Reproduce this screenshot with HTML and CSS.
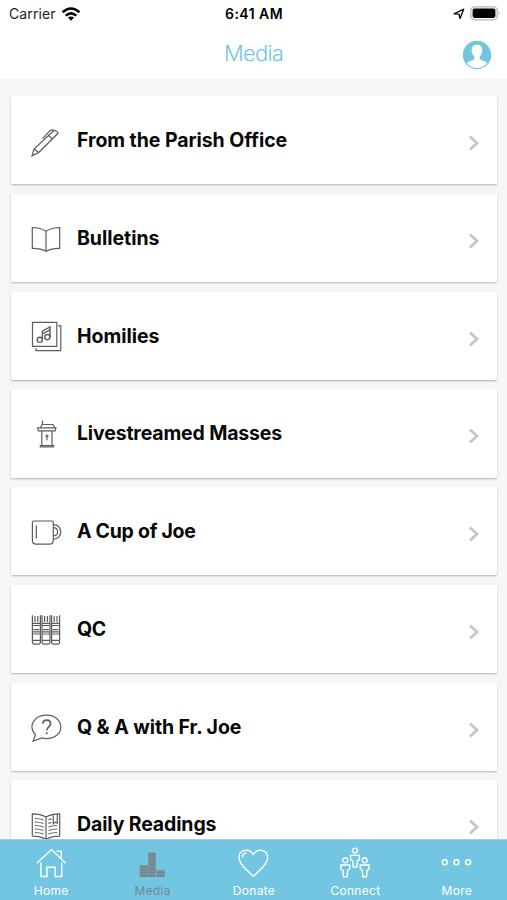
FILE: index.html
```html
<!DOCTYPE html>
<html lang="en">
<head>
<meta charset="utf-8">
<title>Media</title>
<link rel="stylesheet" href="styles.css">
</head>
<body>
<div class="app">
  <header class="header">
    <div class="status">
      <div class="status-left"><span class="carrier">Carrier</span>
        <svg class="wifi" viewBox="0 0 20 14"><g fill="none" stroke="#000" stroke-width="2.5"><path d="M1.6 5.2Q10-2.3 18.4 5.2"/><path d="M4.7 8.6Q10 4.1 15.3 8.6"/></g><path d="M6.9 10.6Q10 8.2 13.1 10.6L10 13.8Z"/></svg>
      </div>
      <span class="time">6:41 AM</span>
      <div class="status-right">
        <svg class="location" viewBox="0 0 12 12"><path d="M1 5.8 10.7 1.2 7 10.6 6.1 6.1Z" fill="none" stroke="#111" stroke-width="1.4" stroke-linejoin="round"/></svg>
        <svg class="battery" viewBox="0 0 31 15"><rect x=".8" y=".8" width="26.4" height="13" rx="3.6" fill="#fff" stroke="#b5b5b5" stroke-width="1.3"/><rect x="2.6" y="2.6" width="22.8" height="9.4" rx="2"/><path d="M28.6 5Q30.8 7.3 28.6 9.6Z" fill="#b5b5b5"/></svg>
      </div>
    </div>
    <div class="titlebar">
      <h1 class="title">Media</h1>
      <svg class="avatar" viewBox="0 0 30 30"><circle cx="15" cy="15" r="14.2" fill="#72c5e0"/><path d="M15 4.800c-3.600 0-5.600 2.500-5.300 6.200.2 2.500 1 4.200 2.700 5.700.2 2-.3 3-2.400 3.700-2.500.8-4.300 1.600-5.300 2.600A12.900 12.900 0 0 0 25.300 23c-1-1-2.800-1.800-5.300-2.600-2.100-.7-2.600-1.700-2.400-3.700 1.700-1.500 2.500-3.200 2.700-5.700.3-3.700-1.700-6.200-5.300-6.200Z" fill="#fff"/></svg>
    </div>
  </header>

  <main class="list">
    <a class="card">
      <svg class="icon" viewBox="0 0 36 36"><path d="m4 31.800 2-6.800L25 7.300q2.800-2 5 2L10.800 28.400ZM6 25l4.800 3.400M20.500 11.600l4.300 3.300M14.500 14.600l7.300-7.700q1.800-1.700 4.300-.6"/></svg>
      <span class="label l1">From the Parish Office</span>
      <svg class="chevron" viewBox="0 0 12 18"><path d="m2 2.500 7 6.500-7 6.500"/></svg>
    </a>
    <a class="card">
      <svg class="icon" viewBox="0 0 36 36"><path d="M18 9.300Q12.500 5.500 4.300 5.500v20.800q8.200-.2 13.700 3 5.500-3.200 13.700-3V5.500Q23.500 5.500 18 9.300v20"/></svg>
      <span class="label l2">Bulletins</span>
      <svg class="chevron" viewBox="0 0 12 18"><path d="m2 2.500 7 6.500-7 6.500"/></svg>
    </a>
    <a class="card">
      <svg class="icon" viewBox="0 0 36 36"><path d="M4.500 2.300h24.300v24H4.500ZM30 5.800h2.800v24.900H8v-2.700"/><g stroke-width="1.400"><circle cx="11.800" cy="19.800" r="2.600"/><circle cx="19.400" cy="17.100" r="2.600"/><path d="M14.400 19.800v-8.600L22 7v10.100M14.400 14 22 9.800"/></g></svg>
      <span class="label l3">Homilies</span>
      <svg class="chevron" viewBox="0 0 12 18"><path d="m2 2.500 7 6.500-7 6.500"/></svg>
    </a>
    <a class="card">
      <svg class="icon" viewBox="0 0 36 36"><path d="M12.500 10.500 14 7.500h11l1.700 3M9.600 10.800h18.300l-.8 3H10.400ZM13.800 14v14.500M24 14v14.500M12.300 28.500h13.300v1.400H12.300ZM14.500 7V3.600M18.900 17.200v6M17.300 19.100h3.200"/></svg>
      <span class="label l4">Livestreamed Masses</span>
      <svg class="chevron" viewBox="0 0 12 18"><path d="m2 2.500 7 6.500-7 6.500"/></svg>
    </a>
    <a class="card">
      <svg class="icon" viewBox="0 0 36 36"><path d="M5.700 6h18q1.600 0 1.600 1.600v18q0 3.600-3.600 3.600H8q-3.600 0-3.600-3.600v-18Q4.400 6 5.700 6ZM8.300 10.500v13M25.300 9.700c10-.5 10 14.800 0 14.300M25.300 12.700c5.800 0 5.800 8.200 0 8.200"/></svg>
      <span class="label l5">A Cup of Joe</span>
      <svg class="chevron" viewBox="0 0 12 18"><path d="m2 2.500 7 6.500-7 6.500"/></svg>
    </a>
    <a class="card">
      <svg class="icon" viewBox="0 0 36 36"><defs><path id="marker" d="M4.400 2.300v27q0 1.800 2 1.800h4q2 0 2-1.800v-27M7 3v6M9.800 3v6M4.400 10.300h8M4.400 12.500h8M4.400 18.800h8M4.400 21h8M4.400 27.300h8M5.500 16.700h5.800"/></defs><use href="#marker"/><use href="#marker" x="9.600"/><use href="#marker" x="19.200"/></svg>
      <span class="label l6">QC</span>
      <svg class="chevron" viewBox="0 0 12 18"><path d="m2 2.500 7 6.500-7 6.500"/></svg>
    </a>
    <a class="card">
      <svg class="icon" viewBox="0 0 36 36"><path d="M7.500 23.700C-.5 15.500 6 4.100 18.500 4.100c8 0 14.300 5 14.300 11.800 0 8.300-9.300 13.600-19.100 11L5 30.300Z"/><path class="bold" d="M14.800 12.800c0-5 7.800-4.800 7.800-.2 0 3.300-3.900 3.200-3.900 7M18.700 21.200v2"/></svg>
      <span class="label l7">Q &amp; A with Fr. Joe</span>
      <svg class="chevron" viewBox="0 0 12 18"><path d="m2 2.500 7 6.500-7 6.500"/></svg>
    </a>
    <a class="card">
      <svg class="icon" viewBox="0 0 36 36"><path d="M18 9Q12 5.700 4.300 5.800v22.400q7.700 0 13.700 3 6-3 13.700-3V5.800Q24 5.700 18 9v22M7 10.500q4.500 0 8.500 1.500M7 14q4.500 0 8.500 1.500M7 17.500q4.500 0 8.500 1.500M7 21q4.500 0 8.500 1.500M7 24.500q4.500 0 8.500 1.500M20.500 19q4-1.500 8.500-1.500M20.500 22.500q4-1.500 8.500-1.500M20.500 26q4-1.500 8.500-1.500M20.500 11.700l3-.8M20.500 15.300l3-.8M25.300 6.500v9.200l2-1.600 2 1V6"/></svg>
      <span class="label l8">Daily Readings</span>
      <svg class="chevron" viewBox="0 0 12 18"><path d="m2 2.500 7 6.500-7 6.500"/></svg>
    </a>
  </main>

  <nav class="tabs">
    <a class="tab"><svg class="tab-icon" viewBox="0 0 36 36"><path d="M3.800 18.300 18.500 4.600l14.200 13.700M23.500 6.200h4.800v7M7.900 17.500v14h6V22.300h8.300v9.200h6.500v-14"/></svg><span class="tab-label">Home</span></a>
    <a class="tab active"><svg class="tab-icon" viewBox="0 0 36 36"><path d="M5.700 20.300H14v11.800H5.700ZM14.300 7.500h7.500v24.600h-7.500ZM22.500 25.200h8.200v6.900h-8.200Z" fill="#748891" stroke="none"/><path d="M5.700 23.300H14M5.700 26.300h25M5.700 29.300h25M14.300 11h7.500M14.300 14.500h7.500M14.300 18h7.500M14.300 22h7.500" stroke="#7da9b9" stroke-width=".5"/></svg><span class="tab-label">Media</span></a>
    <a class="tab"><svg class="tab-icon" viewBox="0 0 36 36"><path d="M18.300 31.300C10.300 24 4 18.500 4 12.300c0-7.800 10.100-9.500 14.300-2.800 4.200-6.700 14.300-5 14.300 2.800 0 6.200-6.300 11.700-14.300 19ZM7.400 12.500c0-2.700 1.700-4.300 4.100-4.500"/></svg><span class="tab-label">Donate</span></a>
    <a class="tab"><svg class="tab-icon" viewBox="0 0 36 36"><defs><path id="person" d="M15.500 5.600a2.500 2.500 0 1 0 5 0a2.500 2.500 0 1 0-5 0M13.600 10.400h8.800v3.500q0 1.400-2 1.800l-.6 6.400h-3.600l-.6-6.400q-2-.4-2-1.800Z"/></defs><use href="#person"/><use href="#person" x="-9.700" y="9.600"/><use href="#person" x="9.700" y="9.600"/></svg><span class="tab-label">Connect</span></a>
    <a class="tab"><svg class="tab-icon" viewBox="0 0 36 36"><circle cx="6.800" cy="17.200" r="2.500"/><circle cx="18.500" cy="17.200" r="2.500"/><circle cx="30.200" cy="17.200" r="2.500"/></svg><span class="tab-label">More</span></a>
  </nav>
</div>
</body>
</html>
```
FILE: styles.css
```css
* { box-sizing: border-box; }
body { margin: 0; background: #f6f6f6; font-family: Inter, "Liberation Sans", sans-serif; }
.app { height: 900px; display: flex; flex-direction: column; overflow: hidden; }
.header { height: 79px; flex: none; background: #fff; }
.status { height: 27px; display: grid; grid-template-columns: 1fr auto 1fr; align-items: center; padding: 0 6px 0 9px; }
.status-left, .status-right { display: flex; align-items: center; }
.status-right { justify-content: flex-end; gap: 5px; }
.carrier { font-size: 14px; color: #222; letter-spacing: .12px; }
.wifi { width: 20px; height: 14px; margin-left: 5px; }
.time { font-size: 14px; font-weight: 600; letter-spacing: .45px; margin-right: 2px; }
.location { width: 12px; height: 12px; }
.battery { width: 31px; height: 15px; }
.titlebar { height: 52px; display: grid; grid-template-columns: 1fr auto 1fr; align-items: center; padding: 0 15px 0 14px; }
.title { grid-column: 2; margin: 0; font-size: 22px; line-height: 50px; letter-spacing: -.8px; font-weight: 300; color: #72c5e0; padding-left: 1px; }
.avatar { width: 30px; height: 30px; justify-self: end; margin-top: 3px; }
.list { flex: 1; min-height: 0; overflow: hidden; display: flex; flex-direction: column; gap: 9.500px; padding: 17px 10px 0 11px; }
.card { flex: none; height: 88.250px; display: flex; align-items: center; background: #fff; padding: 0 17px; box-shadow: 0 1px 2px rgba(0,0,0,.27); border-radius: 1px; }
.icon { width: 36px; height: 36px; margin-top: 4px; fill: none; stroke: #5c5c5c; stroke-width: 1.200; }
.bold { stroke-width: 1.600; }
.label { flex: 1; margin-left: 13px; font-size: 19.500px; line-height: 24px; font-weight: 650; color: #080808; white-space: nowrap; }
.l1 { letter-spacing: -.06px; }
.l2 { letter-spacing: -.03px; }
.l3 { letter-spacing: -.03px; }
.l4 { letter-spacing: -.16px; }
.l5 { letter-spacing: -.28px; }
.l6 { letter-spacing: -.5px; }
.l7 { letter-spacing: -.08px; }
.l8 { letter-spacing: -.13px; }
.chevron { width: 12px; height: 18px; margin-top: 6px; fill: none; stroke: #c7c7c7; stroke-width: 2.900; }
.tabs { flex: none; height: 61px; display: grid; grid-template-columns: repeat(5, 1fr); background: #72c6e2; border-top: 1px solid #a5cddd; }
.tab { display: flex; flex-direction: column; align-items: center; padding-top: 5px; font-size: 12px; line-height: 16px; letter-spacing: .3px; color: #fff; }
.active { color: #748891; }
.tab-label { padding-left: 1px; }
.tab-icon { width: 36px; height: 36px; margin-bottom: 2px; fill: none; stroke: #fff; stroke-width: 1.400; }
```
